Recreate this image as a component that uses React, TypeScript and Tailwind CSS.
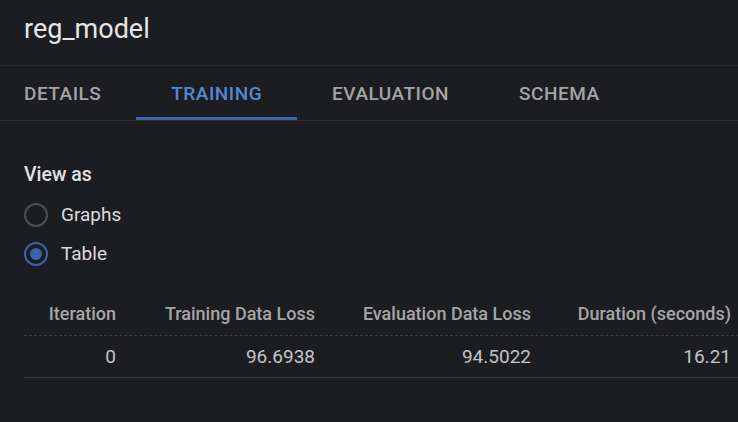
import { useState } from "react";

const tabs = ["DETAILS", "TRAINING", "EVALUATION", "SCHEMA"];

const rows = [
  { iteration: 0, trainLoss: "96.6938", evalLoss: "94.5022", duration: "16.21" },
];

function Radio({ checked, label, onClick }: { checked: boolean; label: string; onClick: () => void }) {
  return (
    <button onClick={onClick} className="flex items-center gap-[13px] h-[39px] cursor-pointer">
      <span
        className={
          checked
            ? "w-[24px] h-[24px] rounded-full border-2 border-[#3b63ad] flex items-center justify-center"
            : "w-[24px] h-[24px] rounded-full border-2 border-[#4e4f52] flex items-center justify-center"
        }
      >
        {checked && <span className="w-[12px] h-[12px] rounded-full bg-[#3b63ad]"></span>}
      </span>
      <span className="text-[19px] text-[#dcdcdc]">{label}</span>
    </button>
  );
}

export default function App() {
  const [tab, setTab] = useState("TRAINING");
  const [view, setView] = useState("Table");

  return (
    <div className="w-[738px] h-[422px] overflow-hidden bg-[#1c1d20] font-['Roboto',sans-serif]">
      {/* Title */}
      <div className="h-[66px] flex items-center px-6 border-b border-[#2a2b2f]">
        <h1 className="text-[27px] text-[#e6e6e6] font-normal pb-[6px]">reg_model</h1>
      </div>

      {/* Tabs */}
      <div className="h-[55px] flex border-b border-[#2a2b2f] -ml-[11px]">
        {tabs.map((t) => (
          <button
            key={t}
            onClick={() => setTab(t)}
            className={
              t === tab
                ? "px-[35px] h-full flex items-center text-[19px] font-medium tracking-[0.5px] text-[#5488d3] border-b-[3px] border-[#3f67b0] pt-[5px] cursor-pointer"
                : "px-[35px] h-full flex items-center text-[19px] font-medium tracking-[0.5px] text-[#a4a4a4] border-b-[3px] border-transparent pt-[5px] cursor-pointer"
            }
          >
            {t}
          </button>
        ))}
      </div>

      {/* View as */}
      <div className="px-6 pt-[39px]">
        <div className="text-[19.5px] font-medium text-[#e2e2e2] mb-[6px]">View as</div>
        <div className="flex flex-col">
          <Radio checked={view === "Graphs"} label="Graphs" onClick={() => setView("Graphs")} />
          <Radio checked={view === "Table"} label="Table" onClick={() => setView("Table")} />
        </div>
      </div>

      {/* Table */}
      <div className="ml-6 mt-[19px] w-[760px]">
        <div className="grid grid-cols-[92px_199px_216px_200px_1fr] h-[44px] items-center border-b border-dashed border-[#3c3d41] text-[18px] font-medium text-[#a6a6a6]">
          <div className="text-right">Iteration</div>
          <div className="text-right">Training Data Loss</div>
          <div className="text-right">Evaluation Data Loss</div>
          <div className="text-right whitespace-nowrap">Duration (seconds)</div>
          <div></div>
        </div>
        {rows.map((r) => (
          <div
            key={r.iteration}
            className="grid grid-cols-[92px_199px_216px_200px_1fr] h-[42px] items-center border-b border-[#404145] text-[19px] text-[#c4c4c4]"
          >
            <div className="text-right">{r.iteration}</div>
            <div className="text-right">{r.trainLoss}</div>
            <div className="text-right">{r.evalLoss}</div>
            <div className="text-right">{r.duration}</div>
            <div></div>
          </div>
        ))}
      </div>
    </div>
  );
}
